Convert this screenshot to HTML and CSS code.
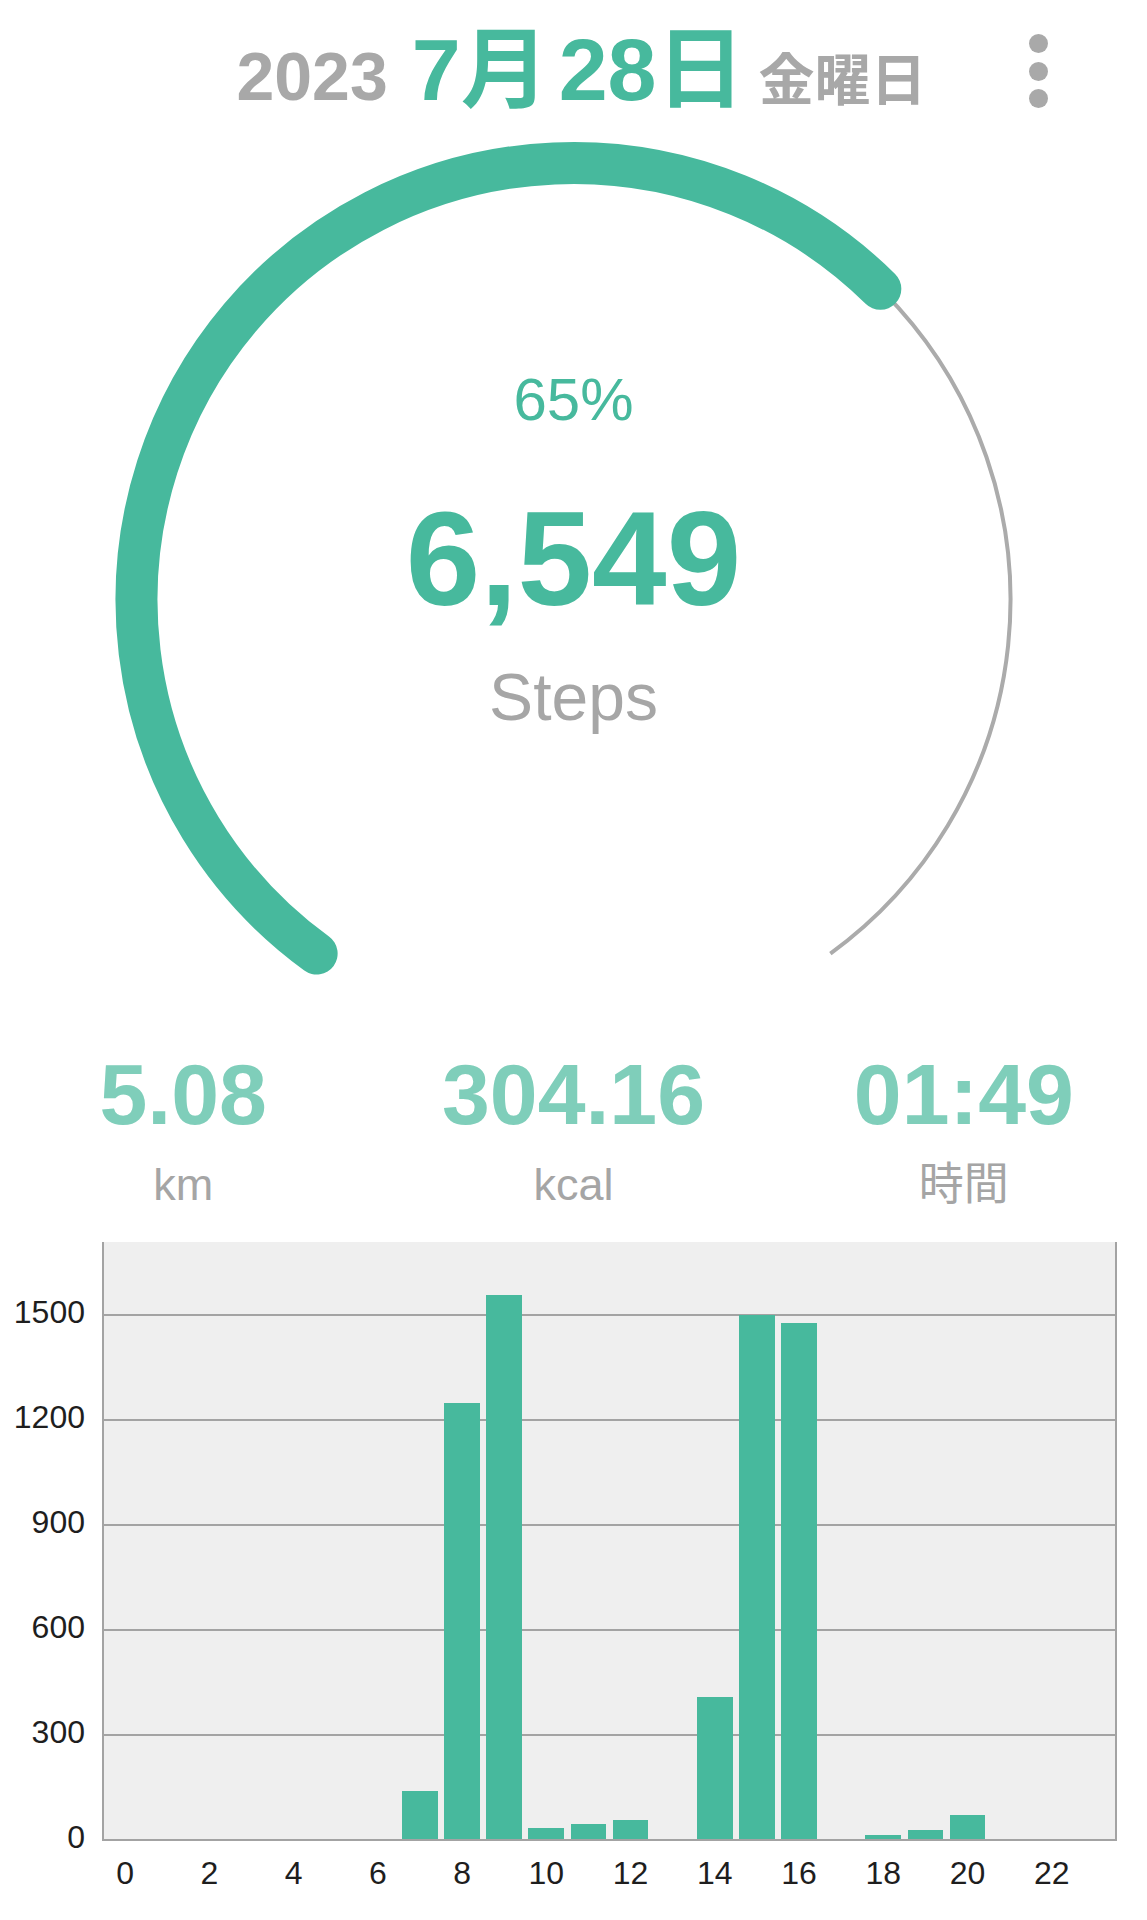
FILE: index.html
```html
<!DOCTYPE html>
<html lang="ja">
<head>
    <meta charset="UTF-8">
    <meta name="viewport" content="width=device-width, initial-scale=1.0">
    <title>歩数</title>
    <link rel="stylesheet" href="styles.css">
</head>
<body>
    <header class="top">
        <h1 class="date"><span class="year">2023</span><span class="day">7月</span><span class="day">28日</span><span class="weekday">金曜日</span></h1>
        <button class="menu" aria-label="メニュー"><span></span><span></span><span></span></button>
    </header>

    <section class="gauge">
        <svg class="ring" viewBox="0 0 1147 880" width="1147" height="880">
            <path class="track" d="M316.64 823.54 A437 437 0 1 1 830.36 823.54"/>
            <path class="progress" d="M316.64 823.54 A437 437 0 1 1 880.34 158.84"/>
        </svg>
        <div class="gauge-text">
            <div class="percent">65%</div>
            <div class="steps">6,549</div>
            <div class="steps-label">Steps</div>
        </div>
    </section>

    <section class="stats">
        <div class="stat">
            <div class="stat-value">5.08</div>
            <div class="stat-unit">km</div>
        </div>
        <div class="stat">
            <div class="stat-value">304.16</div>
            <div class="stat-unit">kcal</div>
        </div>
        <div class="stat">
            <div class="stat-value">01:49</div>
            <div class="stat-unit">時間</div>
        </div>
    </section>

    <section class="chart">
        <div class="y-axis">
            <span>1500</span>
            <span>1200</span>
            <span>900</span>
            <span>600</span>
            <span>300</span>
            <span>0</span>
        </div>
        <div class="plot-area">
            <div class="plot">
                <div class="slot"></div>
                <div class="slot"></div>
                <div class="slot"></div>
                <div class="slot"></div>
                <div class="slot"></div>
                <div class="slot"></div>
                <div class="slot"></div>
                <div class="slot"><div class="bar" style="height: 48.3px"></div></div>
                <div class="slot"><div class="bar" style="height: 436.1px"></div></div>
                <div class="slot"><div class="bar" style="height: 543.6px"></div></div>
                <div class="slot"><div class="bar" style="height: 10.9px"></div></div>
                <div class="slot"><div class="bar" style="height: 15.1px"></div></div>
                <div class="slot"><div class="bar" style="height: 18.6px"></div></div>
                <div class="slot"></div>
                <div class="slot"><div class="bar" style="height: 141.8px"></div></div>
                <div class="slot"><div class="bar" style="height: 524.3px"></div></div>
                <div class="slot"><div class="bar" style="height: 516.3px"></div></div>
                <div class="slot"></div>
                <div class="slot"><div class="bar" style="height: 3.9px"></div></div>
                <div class="slot"><div class="bar" style="height: 9.1px"></div></div>
                <div class="slot"><div class="bar" style="height: 24.5px"></div></div>
                <div class="slot"></div>
                <div class="slot"></div>
                <div class="slot"></div>
            </div>
            <div class="x-axis">
                <span>0</span><span></span>
                <span>2</span><span></span>
                <span>4</span><span></span>
                <span>6</span><span></span>
                <span>8</span><span></span>
                <span>10</span><span></span>
                <span>12</span><span></span>
                <span>14</span><span></span>
                <span>16</span><span></span>
                <span>18</span><span></span>
                <span>20</span><span></span>
                <span>22</span><span></span>
            </div>
        </div>
    </section>
</body>
</html>
```

FILE: styles.css
```css
body {
    margin: 0;
    background-color: #fff;
    font-family: "Liberation Sans", "Noto Sans CJK JP", sans-serif;
    color: #222;
}

/* header */
.top {
    position: relative;
    box-sizing: border-box;
    height: 130px;
    padding-top: 27px;
}
.date {
    margin: 0;
    padding-left: 16px;
    text-align: center;
    font-size: 88px;
    line-height: 86px;
    font-weight: bold;
    white-space: nowrap;
}
.year {
    font-size: 68px;
    color: #a8a8a8;
    margin-right: 24px;
}
.day {
    color: #47b99d;
}
.day + .day {
    margin-left: 10px;
}
.weekday {
    font-size: 56px;
    color: #a8a8a8;
    margin-left: 14px;
}
.menu {
    position: absolute;
    top: 34px;
    right: 99px;
    display: flex;
    flex-direction: column;
    gap: 8.5px;
    border: none;
    background: none;
    padding: 0;
}
.menu span {
    width: 19px;
    height: 19px;
    border-radius: 50%;
    background-color: #a9a9a9;
}

/* ring */
.gauge {
    position: relative;
    height: 880px;
}
.ring {
    position: absolute;
    top: 0;
    left: 0;
}
.track {
    fill: none;
    stroke: #ababab;
    stroke-width: 4;
}
.progress {
    fill: none;
    stroke: #47b99d;
    stroke-width: 42;
    stroke-linecap: round;
}
.gauge-text {
    position: relative;
    padding-top: 230px;
    text-align: center;
}
.percent {
    font-size: 60px;
    line-height: 80px;
    color: #47b99d;
}
.steps {
    margin-top: 49px;
    font-size: 134px;
    line-height: 140px;
    font-weight: bold;
    color: #47b99d;
}
.steps-label {
    margin-top: 28px;
    font-size: 66px;
    line-height: 80px;
    color: #a6a6a6;
}

/* summary */
.stats {
    display: grid;
    grid-template-columns: repeat(3, 1fr);
    margin: 0 -12px;
    padding-top: 34px;
    text-align: center;
}
.stat-value {
    font-size: 86px;
    line-height: 100px;
    font-weight: bold;
    color: #7fceba;
}
.stat-unit {
    margin-top: 11px;
    font-size: 45px;
    line-height: 60px;
    color: #a5a5a5;
}

/* hourly chart */
.chart {
    display: flex;
    align-items: flex-start;
    margin-top: 27px;
    padding-right: 30px;
    font-size: 32px;
    color: #1e1e1e;
}
.y-axis {
    display: flex;
    flex-direction: column;
    box-sizing: border-box;
    width: 102px;
    padding-top: 18px;
    padding-right: 17px;
    text-align: right;
}
.y-axis span {
    height: 105px;
    line-height: 105px;
}
.plot-area {
    flex: 1;
}
.plot {
    display: flex;
    height: 597px;
    border: 2px solid #a3a3a3;
    border-top: none;
    background-color: #efefef;
    background-image: repeating-linear-gradient(to top, transparent 0, transparent 103px, #a3a3a3 103px, #a3a3a3 105px);
}
.slot {
    flex: 1;
    display: flex;
    justify-content: center;
    align-items: flex-end;
}
.bar {
    width: 85%;
    background-color: #47b99d;
}
.x-axis {
    display: flex;
    margin-top: 12px;
    padding: 0 2px;
    line-height: 40px;
}
.x-axis span {
    flex: 1;
    text-align: center;
    white-space: nowrap;
}
```
